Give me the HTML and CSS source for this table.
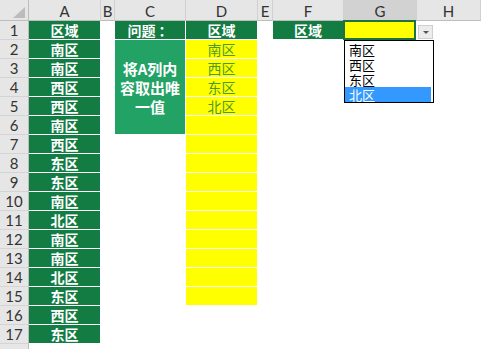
FILE: index.html
```html
<!DOCTYPE html>
<html lang="zh">
<head>
<meta charset="utf-8">
<link rel="stylesheet" href="styles.css">
</head>
<body>
<div class="sheet">
  <div class="ch corner"><span class="tri"></span></div>
  <div class="ch">A</div><div class="ch">B</div><div class="ch">C</div><div class="ch">D</div><div class="ch">E</div><div class="ch">F</div><div class="ch chsel">G</div><div class="ch">H</div>

  <div class="rh">1</div><div class="c dk">区域</div><div class="c"></div><div class="c dk">问题 ：</div><div class="c dk">区域</div><div class="c"></div><div class="c dk">区域</div>
  <div class="c yl g1">
    <div class="selbox"></div>
    <div class="ddbtn"><span class="arrow"></span></div>
    <ul class="ddlist">
      <li>南区</li><li>西区</li><li>东区</li><li class="hl">北区</li>
    </ul>
  </div>
  <div class="c"></div>

  <div class="rh">2</div><div class="c dk">南区</div><div class="c"></div><div class="c lt merged">将A列内<br>容取出唯<br>一值</div><div class="c yl">南区</div><div class="c"></div><div class="c"></div><div class="c"></div><div class="c"></div>
  <div class="rh">3</div><div class="c dk">南区</div><div class="c"></div><div class="c yl">西区</div><div class="c"></div><div class="c"></div><div class="c"></div><div class="c"></div>
  <div class="rh">4</div><div class="c dk">西区</div><div class="c"></div><div class="c yl">东区</div><div class="c"></div><div class="c"></div><div class="c"></div><div class="c"></div>
  <div class="rh">5</div><div class="c dk">西区</div><div class="c"></div><div class="c yl">北区</div><div class="c"></div><div class="c"></div><div class="c"></div><div class="c"></div>
  <div class="rh">6</div><div class="c dk">南区</div><div class="c"></div><div class="c yl"></div><div class="c"></div><div class="c"></div><div class="c"></div><div class="c"></div>
  <div class="rh">7</div><div class="c dk">西区</div><div class="c"></div><div class="c"></div><div class="c yl"></div><div class="c"></div><div class="c"></div><div class="c"></div><div class="c"></div>
  <div class="rh">8</div><div class="c dk">东区</div><div class="c"></div><div class="c"></div><div class="c yl"></div><div class="c"></div><div class="c"></div><div class="c"></div><div class="c"></div>
  <div class="rh">9</div><div class="c dk">东区</div><div class="c"></div><div class="c"></div><div class="c yl"></div><div class="c"></div><div class="c"></div><div class="c"></div><div class="c"></div>
  <div class="rh">10</div><div class="c dk">南区</div><div class="c"></div><div class="c"></div><div class="c yl"></div><div class="c"></div><div class="c"></div><div class="c"></div><div class="c"></div>
  <div class="rh">11</div><div class="c dk">北区</div><div class="c"></div><div class="c"></div><div class="c yl"></div><div class="c"></div><div class="c"></div><div class="c"></div><div class="c"></div>
  <div class="rh">12</div><div class="c dk">南区</div><div class="c"></div><div class="c"></div><div class="c yl"></div><div class="c"></div><div class="c"></div><div class="c"></div><div class="c"></div>
  <div class="rh">13</div><div class="c dk">南区</div><div class="c"></div><div class="c"></div><div class="c yl"></div><div class="c"></div><div class="c"></div><div class="c"></div><div class="c"></div>
  <div class="rh">14</div><div class="c dk">北区</div><div class="c"></div><div class="c"></div><div class="c yl"></div><div class="c"></div><div class="c"></div><div class="c"></div><div class="c"></div>
  <div class="rh">15</div><div class="c dk">东区</div><div class="c"></div><div class="c"></div><div class="c yl"></div><div class="c"></div><div class="c"></div><div class="c"></div><div class="c"></div>
  <div class="rh">16</div><div class="c dk">西区</div><div class="c"></div><div class="c"></div><div class="c"></div><div class="c"></div><div class="c"></div><div class="c"></div><div class="c"></div>
  <div class="rh">17</div><div class="c dk">东区</div><div class="c"></div><div class="c"></div><div class="c"></div><div class="c"></div><div class="c"></div><div class="c"></div><div class="c"></div>
  <div class="rh"></div><div class="c"></div><div class="c"></div><div class="c"></div><div class="c"></div><div class="c"></div><div class="c"></div><div class="c"></div><div class="c"></div>
</div>
</body>
</html>
```

FILE: styles.css
```css
html, body {
  margin: 0;
  padding: 0;
  background: #ffffff;
  overflow: hidden;
}

.sheet {
  display: grid;
  grid-template-columns: 29px 72px 14px 71px 72px 15px 71px 73px 64px;
  grid-template-rows: 21px repeat(18, 19px);
  width: 481px;
  font-family: "Noto Sans CJK SC", "Noto Sans", sans-serif;
}

.ch {
  box-sizing: border-box;
  background: #e6e6e6;
  border-right: 1px solid #d0d0d0;
  border-bottom: 1px solid #bdbdbd;
  color: #333333;
  font-family: "Lato", "Liberation Sans", sans-serif;
  font-size: 15px;
  display: flex;
  align-items: center;
  justify-content: center;
  padding-top: 1px;
}

.chsel {
  background: #d2d2d2;
}

.corner {
  position: relative;
  border-right: 1px solid #bdbdbd;
}

.tri {
  position: absolute;
  right: 3px;
  bottom: 2px;
  width: 0;
  height: 0;
  border-left: 12px solid transparent;
  border-bottom: 11px solid #bcbcbc;
}

.rh {
  box-sizing: border-box;
  background: #e6e6e6;
  border-right: 1px solid #bdbdbd;
  border-bottom: 1px solid #d4d4d4;
  color: #333333;
  font-family: "Lato", "Liberation Sans", sans-serif;
  font-size: 15px;
  display: flex;
  align-items: center;
  justify-content: center;
}

.c {
  box-sizing: border-box;
  border-right: 1px solid #ffffff;
  border-bottom: 1px solid #ffffff;
  display: flex;
  align-items: center;
  justify-content: center;
  font-size: 14px;
  line-height: 18px;
  white-space: nowrap;
}

.dk {
  background: #127c43;
  color: #ffffff;
  font-weight: bold;
}

.lt {
  background: #22a264;
  color: #ffffff;
  font-weight: bold;
}

.merged {
  grid-row: span 5;
  text-align: center;
  line-height: 19px;
  font-size: 15px;
  white-space: normal;
}

.yl {
  background: #ffff00;
  color: #4a9a28;
}

.g1 {
  position: relative;
}

.selbox {
  position: absolute;
  left: -1px;
  top: -1px;
  right: 0;
  bottom: -1px;
  border: 2px solid #1e7145;
  z-index: 3;
}

.ddbtn {
  position: absolute;
  left: 74px;
  top: 4px;
  width: 15px;
  height: 14px;
  box-sizing: border-box;
  background: #ececec;
  border: 1px solid #cfcfcf;
  display: flex;
  align-items: center;
  justify-content: center;
  z-index: 4;
}

.arrow {
  width: 0;
  height: 0;
  border-left: 3px solid transparent;
  border-right: 3px solid transparent;
  border-top: 3px solid #555555;
}

.ddlist {
  position: absolute;
  left: 0;
  top: 19px;
  width: 90px;
  margin: 0;
  padding: 1px 0 0 0;
  list-style: none;
  box-sizing: border-box;
  background: #ffffff;
  border: 1px solid #000000;
  z-index: 5;
}

.ddlist li {
  height: 15px;
  line-height: 15px;
  padding-left: 4px;
  margin-right: 2px;
  font-size: 13px;
  font-weight: normal;
  color: #000000;
  text-align: left;
}

.ddlist .hl {
  background: #3399ff;
  color: #ffffff;
}
```
